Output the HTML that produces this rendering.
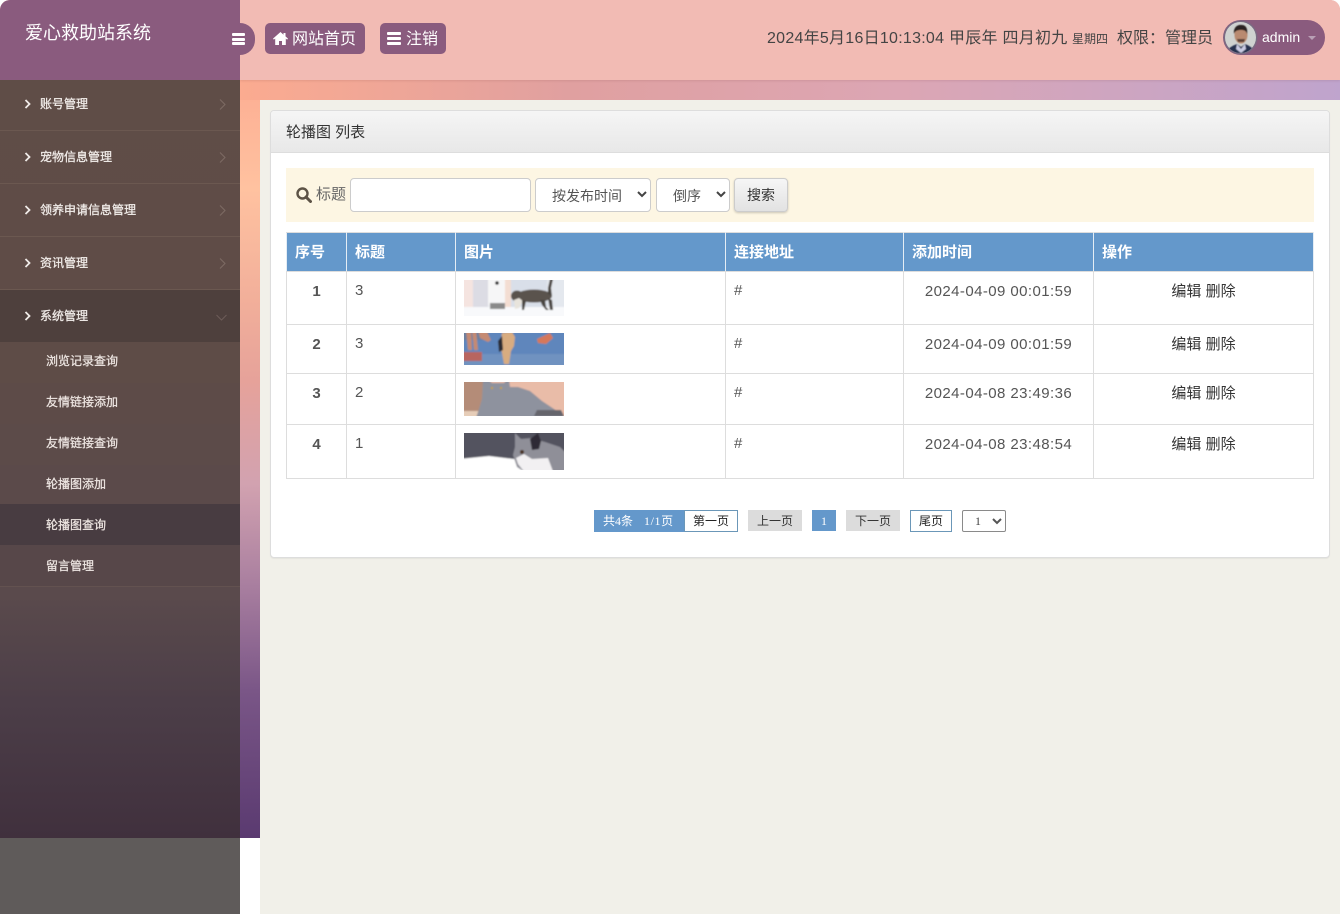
<!DOCTYPE html>
<html lang="zh-CN"><head><meta charset="utf-8"><title>轮播图</title>
<style>
*{box-sizing:border-box}
html,body{margin:0;padding:0;width:1340px;height:914px;overflow:hidden;background:#fff}
body{position:relative;font-family:"Liberation Sans","Noto Sans CJK SC",sans-serif;font-size:14px;color:#555}
.a{position:absolute;white-space:nowrap}
#bg{left:0;top:0;width:1340px;height:838px;border-radius:10px 10px 0 0;background:linear-gradient(160deg,#f9a48e 0%,#ffc2a0 22%,#e7a097 38%,#d2a4b6 50%,#b79ac6 58%,#5a3a70 100%);background-size:100% 100%}
#bg2{left:240px;top:80px;width:1100px;height:20px;background:linear-gradient(90deg,#fbab90 0%,#e0a0a0 30%,#dca6b4 60%,#bfa4cd 100%)}
#bg3{left:240px;top:100px;width:20px;height:738px;background:linear-gradient(180deg,#fdb195 0%,#ffc2a0 12%,#f1ae9a 28%,#e6a29a 38%,#d2a2b0 52%,#a87e9f 66%,#7a5687 80%,#5a3a70 100%)}
#top{left:240px;top:0;width:1100px;height:80px;background:#f2bbb4;border-radius:0 10px 0 0;box-shadow:0 1px 2px rgba(120,60,60,.15)}
#logo{left:0;top:0;width:240px;height:80px;background:#8a5b7e;border-radius:10px 0 0 0;color:#fff;font-size:18px;line-height:24px;padding:20px 0 0 25px}
#toggle{left:240px;top:23px;width:15px;height:32px;background:#8a5b7e;border-radius:0 16px 16px 0}
.burger{position:absolute;height:3px;background:#fff;border-radius:1px}
.tb{top:23px;height:31px;background:#8a5b7e;border-radius:5px;color:#fff;font-size:16px;line-height:34px}
#side{left:0;top:80px;width:240px;height:758px;background:linear-gradient(180deg,#5f4d47 0%,#5f4c47 30%,#5a4a4a 55%,#5a4a4c 68%,#4c3e48 82%,#40303d 100%)}
#foot{left:0;top:838px;width:240px;height:76px;background:#5f5b5a}
.m{left:0;width:240px;height:53px;border-bottom:1px solid #6b5850;color:#f0ebe8;font-size:12px;font-weight:700}
.m b{position:absolute;left:40px;top:18px;line-height:16px;font-weight:400;-webkit-text-stroke:.3px #f0ebe8}
.m svg{position:absolute}
.s{left:0;width:240px;height:41px;color:#eee6e2;font-size:12px}
.s span{position:absolute;left:46px;top:11px;line-height:16px;-webkit-text-stroke:.25px #eee6e2}
#main{left:260px;top:100px;width:1080px;height:814px;background:#f1f0e9}
#panel{left:270px;top:110px;width:1060px;height:448px;background:#fff;border:1px solid #ddd;border-radius:4px;box-shadow:0 1px 1px rgba(0,0,0,.05)}
#ph{left:271px;top:111px;width:1058px;height:42px;background:linear-gradient(180deg,#f5f5f5,#e8e8e8);border-bottom:1px solid #ddd;color:#333;font-size:15px;line-height:43px;padding-left:15px;border-radius:3px 3px 0 0}
#sb{left:286px;top:168px;width:1028px;height:54px;background:#fdf6e3}
.ctl{top:178px;height:34px;background:#fff;border:1px solid #ccc;border-radius:4px;color:#555;font-size:14px;line-height:34px}
table{position:absolute;left:286px;top:232px;width:1027px;border-collapse:collapse;table-layout:fixed;font-size:14px;color:#555}
td,th{border:1px solid #ddd;vertical-align:top;padding:10px 8px 0;text-align:left;line-height:18px}
th{background:#6498cb;color:#fff;font-weight:700;font-size:15px;height:39px;padding-top:11px;border-color:#ddd}
th{border-left-color:#e4edf5;border-right-color:#e4edf5}
.n{text-align:center;font-weight:700;font-size:15px;padding-top:11px}
.d{padding-top:10px;font-size:15px}
.o{text-align:center;color:#333;font-size:15px;padding-top:11px}
.t{text-align:center;padding:11px 0 0;font-size:15px;letter-spacing:.42px}
.pg{top:510px;height:21px;font-family:"Liberation Serif","Noto Sans CJK SC",serif;font-size:12px;line-height:22px;text-align:center}
.ph{display:block;position:absolute;left:464px}
</style></head><body>
<div class="a" id="bg"></div><div class="a" id="bg2"></div><div class="a" id="bg3"></div>
<div class="a" id="top"></div>
<div class="a" id="logo" style="padding-top:21px">爱心救助站系统</div>
<div class="a" id="toggle"></div>
<div class="burger" style="left:232px;top:33px;width:13px"></div>
<div class="burger" style="left:232px;top:38px;width:13px"></div>
<div class="burger" style="left:232px;top:42px;width:13px"></div>

<div class="a tb" style="left:265px;width:100px;padding-left:27px">网站首页</div>
<svg class="a" style="left:273px;top:32px" width="15" height="13" viewBox="0 0 15 13"><path d="M7.500 0L0 6.600l.9 1L2.200 6.500V13H6V9h3v4h3.800V6.500l1.300 1.100.9-1L12.500 4.400V1h-2v1.700z" fill="#fff"/></svg>
<div class="a tb" style="left:380px;width:66px;padding-left:26px">注销</div>
<div class="burger" style="left:387px;top:32px;width:14px"></div>
<div class="burger" style="left:387px;top:37px;width:14px"></div>
<div class="burger" style="left:387px;top:42px;width:14px"></div>

<div class="a" style="left:767px;top:29px;line-height:20px;font-size:16px;color:#444;letter-spacing:.26px">2024年5月16日10:13:04 甲辰年 四月初九</div>
<div class="a" style="left:1072px;top:29px;line-height:20px;font-size:12px;color:#444">星期四</div>
<div class="a" style="left:1117px;top:29px;line-height:20px;font-size:16px;color:#444">权限：管理员</div>
<div class="a" style="left:1223px;top:20px;width:102px;height:35px;border-radius:18px;background:#8a5b7e"></div>
<svg class="a" style="left:1223px;top:20px" width="35" height="35" viewBox="0 0 35 35"><defs><clipPath id="av"><circle cx="17.500" cy="17.500" r="15.500"/></clipPath><filter id="b1"><feGaussianBlur stdDeviation=".5"/></filter></defs><circle cx="17.500" cy="17.500" r="17" fill="#7a6a82"/><g clip-path="url(#av)"><rect width="35" height="35" fill="#cfd2d0"/><g filter="url(#b1)"><path d="M3 35c1-7 6-9 11-11l4 3 4-3c5 2 9 4 10 11z" fill="#27304f"/><path d="M14 24l4 5 4-5 1 5-5 4-5-4z" fill="#c9cbe3"/><ellipse cx="18" cy="15" rx="6.500" ry="8.500" fill="#b98a70"/><path d="M11 14c-1-7 4-10 8-9 4 0 6 4 5 9-1-3-2-4-6-4s-6 1-7 4z" fill="#2a2422"/><path d="M14 19h8l-1 3h-6z" fill="#5b4238"/></g></g></svg>
<div class="a" style="left:1262px;top:28px;line-height:18px;color:#fff;font-size:14px">admin</div>
<div class="a" style="left:1308px;top:36px;width:0;height:0;border:4px solid transparent;border-top-color:#b9a0b5;border-bottom:0"></div>

<div class="a" id="side"></div><div class="a" id="foot"></div>

<div class="a m" style="top:78px;height:53px"><b>账号管理</b><svg style="left:24px;top:20px" width="8" height="12" viewBox="0 0 8 12"><path d="M1.500 2l4 4-4 4" fill="none" stroke="#f0ebe8" stroke-width="1.800"/></svg><svg style="left:219px;top:21px" width="7" height="11" viewBox="0 0 7 11"><path d="M1 .5l5 5-5 5" fill="none" stroke="#7d6b64"/></svg></div>
<div class="a m" style="top:131px"><b>宠物信息管理</b><svg style="left:24px;top:20px" width="8" height="12" viewBox="0 0 8 12"><path d="M1.500 2l4 4-4 4" fill="none" stroke="#f0ebe8" stroke-width="1.800"/></svg><svg style="left:219px;top:21px" width="7" height="11" viewBox="0 0 7 11"><path d="M1 .5l5 5-5 5" fill="none" stroke="#7d6b64"/></svg></div>
<div class="a m" style="top:184px"><b>领养申请信息管理</b><svg style="left:24px;top:20px" width="8" height="12" viewBox="0 0 8 12"><path d="M1.500 2l4 4-4 4" fill="none" stroke="#f0ebe8" stroke-width="1.800"/></svg><svg style="left:219px;top:21px" width="7" height="11" viewBox="0 0 7 11"><path d="M1 .5l5 5-5 5" fill="none" stroke="#7d6b64"/></svg></div>
<div class="a m" style="top:237px"><b>资讯管理</b><svg style="left:24px;top:20px" width="8" height="12" viewBox="0 0 8 12"><path d="M1.500 2l4 4-4 4" fill="none" stroke="#f0ebe8" stroke-width="1.800"/></svg><svg style="left:219px;top:21px" width="7" height="11" viewBox="0 0 7 11"><path d="M1 .5l5 5-5 5" fill="none" stroke="#7d6b64"/></svg></div>
<div class="a m" style="top:290px;height:52px;background:#4e403d;border-bottom:0"><b>系统管理</b><svg style="left:24px;top:20px" width="8" height="12" viewBox="0 0 8 12"><path d="M1.500 2l4 4-4 4" fill="none" stroke="#f0ebe8" stroke-width="1.800"/></svg><svg style="left:216px;top:24px" width="11" height="7" viewBox="0 0 11 7"><path d="M.5 1l5 5 5-5" fill="none" stroke="#6d5c58"/></svg></div>
<div class="a s" style="top:342px;background:#5e4c47"><span>浏览记录查询</span></div>
<div class="a s" style="top:383px;background:#5d4b48"><span>友情链接添加</span></div>
<div class="a s" style="top:424px;background:#5c4b49"><span>友情链接查询</span></div>
<div class="a s" style="top:465px;height:39px;background:#5b4a4a"><span>轮播图添加</span></div>
<div class="a s" style="top:504px;background:#483c41"><span style="top:13px">轮播图查询</span></div>
<div class="a s" style="top:545px;height:42px;background:#574749;border-bottom:1px solid #635250"><span style="top:13px">留言管理</span></div>

<div class="a" id="main"></div>
<div class="a" id="panel"></div>
<div class="a" id="ph">轮播图 列表</div>
<div class="a" id="sb"></div>
<svg class="a" style="left:296px;top:187px" width="16" height="16" viewBox="0 0 16 16"><circle cx="6.500" cy="6.500" r="5" fill="none" stroke="#5d5346" stroke-width="2.400"/><path d="M10 10l4.500 4.500" stroke="#5d5346" stroke-width="3" stroke-linecap="round"/></svg>
<div class="a" style="left:316px;top:185px;line-height:20px;color:#666;font-size:15px">标题</div>
<div class="a ctl" style="left:350px;width:181px"></div>
<div class="a ctl" style="left:535px;width:116px;padding-left:16px">按发布时间</div>
<svg class="a" style="left:637px;top:191px" width="10" height="7" viewBox="0 0 10 7"><path d="M1 1l4 4 4-4" fill="none" stroke="#444" stroke-width="2"/></svg>
<div class="a ctl" style="left:656px;width:74px;padding-left:16px">倒序</div>
<svg class="a" style="left:716px;top:191px" width="10" height="7" viewBox="0 0 10 7"><path d="M1 1l4 4 4-4" fill="none" stroke="#444" stroke-width="2"/></svg>
<div class="a ctl" style="left:734px;width:54px;background:linear-gradient(180deg,#f6f6f6,#e2e2e2);text-align:center;color:#333;box-shadow:0 1px 2px rgba(0,0,0,.2);line-height:32px">搜索</div>

<table>
<colgroup><col style="width:60px"><col style="width:109px"><col style="width:270px"><col style="width:178px"><col style="width:190px"><col style="width:220px"></colgroup>
<tr><th>序号</th><th>标题</th><th>图片</th><th>连接地址</th><th>添加时间</th><th>操作</th></tr>
<tr style="height:53px"><td class="n">1</td><td class="d">3</td><td></td><td class="d">#</td><td class="t">2024-04-09 00:01:59</td><td class="o">编辑 删除</td></tr>
<tr style="height:49px"><td class="n">2</td><td class="d">3</td><td></td><td class="d">#</td><td class="t">2024-04-09 00:01:59</td><td class="o">编辑 删除</td></tr>
<tr style="height:51px"><td class="n">3</td><td class="d">2</td><td></td><td class="d">#</td><td class="t">2024-04-08 23:49:36</td><td class="o">编辑 删除</td></tr>
<tr style="height:54px"><td class="n">4</td><td class="d">1</td><td></td><td class="d">#</td><td class="t">2024-04-08 23:48:54</td><td class="o">编辑 删除</td></tr>
</table>

<svg class="ph" style="top:280px" width="100" height="36" viewBox="0 0 100 36"><defs><filter id="b" x="-10%" y="-10%" width="120%" height="120%"><feGaussianBlur stdDeviation=".7"/></filter></defs><g filter="url(#b)"><rect x="-5" y="-5" width="110" height="46" fill="#eef0f4"/><rect x="-5" y="-5" width="14" height="33" fill="#f5e4e0"/><rect x="9" y="-5" width="15" height="32" fill="#dcdce4"/><rect x="24" y="-5" width="17" height="30" fill="#f6f6f7"/><rect x="41" y="-5" width="6" height="32" fill="#f3ddd2"/><rect x="47" y="-5" width="36" height="32" fill="#d9dfe9"/><rect x="83" y="-5" width="22" height="32" fill="#e4e8ee"/><rect x="-5" y="27" width="110" height="14" fill="#f8f9fb"/><circle cx="33" cy="3" r="1.800" fill="#222"/><rect x="26" y="23" width="15" height="6" fill="#8a8a8a"/><ellipse cx="70" cy="16" rx="18" ry="6.500" fill="#5a534e"/><ellipse cx="53" cy="16" rx="6" ry="5.500" fill="#5a534e"/><path d="M84 14l0-6 2-9 3 0-2 9 1 8z" fill="#4a4440"/><path d="M50 20l5-2 4 3-4 7-4 1z" fill="#e8e4dc"/><path d="M58 20l4 1-2 9-2 0zM76 20l5 0 1 7 3 3-3 0-4-5zM84 18l4 2 1 10-3 0z" fill="#4a4440"/></g></svg>
<svg class="ph" style="top:333px" width="100" height="32" viewBox="0 0 100 32"><g filter="url(#b)"><rect x="-5" y="-5" width="110" height="42" fill="#5e86bc"/><rect x="-5" y="21" width="110" height="16" fill="#6f92c0"/><rect x="-5" y="-5" width="30" height="12" fill="#6c7f9e"/><rect x="-5" y="19" width="23" height="9" fill="#b8655e"/><path d="M2-3h5l1 20H4zM8-3h4l2 20h-4zM14-3h8l5 10-3 2-8-4z" fill="#c58a72"/><path d="M38 0l10-1 3 5-1 9-3 5-2 13-5 0-2-11-2-8z" fill="#d8ac80"/><path d="M34 8l4-5 1 14-4 2z" fill="#2b2a33"/><path d="M73 6l13-6 3 5-7 6-8-1z" fill="#d5785a"/></g></svg>
<svg class="ph" style="top:382px" width="100" height="34" viewBox="0 0 100 34"><g filter="url(#b)"><rect x="-5" y="-5" width="110" height="44" fill="#e9bca8"/><rect x="-5" y="-5" width="24" height="44" fill="#b48c78"/><rect x="-5" y="29" width="30" height="10" fill="#e6cdb8"/><path d="M19-2h5l4 3 12 0 3-3 2 0 1 7 8 0 12 4 12 10 12 8 9 6 1 3H12l3-9 3-10z" fill="#8e929e"/><circle cx="28" cy="6" r="1.100" fill="#c8a038"/><circle cx="37" cy="6" r="1.100" fill="#c8a038"/><path d="M73 28l24 0 3 6H70z" fill="#65656c"/></g></svg>
<svg class="ph" style="top:433px" width="100" height="37" viewBox="0 0 100 37"><g filter="url(#b)"><rect x="-5" y="-5" width="110" height="47" fill="#53535f"/><path d="M-5 26l30-3 25 3 20 8 30 8H-5z" fill="#fff"/><path d="M51 0l6 6 10-1 14 4 15 5 8 8v20H65l-12-8-4-12 2-8z" fill="#8f8f98"/><path d="M52 25l8-4 8 5 16-1 6 16H62l-8-10z" fill="#f2f0f2"/><path d="M66 6l8-6 3 8-2 8-7 1z" fill="#2e2a34"/><circle cx="58" cy="19" r="2" fill="#4a3020"/></g></svg>

<div class="a pg" style="left:594px;width:91px;height:22px;background:#6498cb;color:#fff;text-align:left;padding-left:9px">共4条</div>
<div class="a pg" style="left:644px;color:#fff;letter-spacing:.6px">1/1页</div>
<div class="a pg" style="left:684px;width:54px;height:22px;border:1px solid #6b97b8;background:#fff;color:#222;line-height:20px">第一页</div>
<div class="a pg" style="left:748px;width:54px;background:#dcdcdc;color:#333">上一页</div>
<div class="a pg" style="left:812px;width:24px;background:#6498cb;color:#fff">1</div>
<div class="a pg" style="left:846px;width:54px;background:#dcdcdc;color:#333">下一页</div>
<div class="a pg" style="left:910px;width:42px;height:22px;border:1px solid #6b97b8;background:#fff;color:#222;line-height:20px">尾页</div>
<div class="a pg" style="left:962px;top:510px;width:44px;height:22px;border:1px solid #8a8a8a;border-radius:2px;background:#fff;color:#444;line-height:20px;text-align:left;padding-left:12px">1</div>
<svg class="a" style="left:992px;top:518px" width="10" height="7" viewBox="0 0 10 7"><path d="M1 1l4 4 4-4" fill="none" stroke="#555" stroke-width="2"/></svg>
</body></html>
